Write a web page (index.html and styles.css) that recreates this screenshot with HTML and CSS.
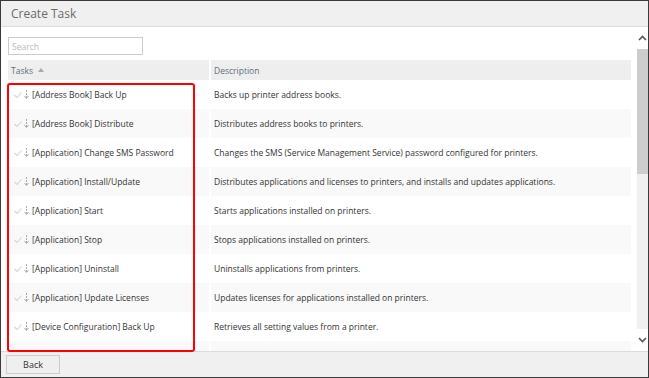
FILE: index.html
```html
<!DOCTYPE html>
<html lang="en">
<head>
    <meta charset="UTF-8">
    <title>Create Task</title>
    <link rel="stylesheet" href="styles.css">
</head>
<body>

<div class="dialog">
    <div class="titlebar">Create Task</div>

    <div class="main">
        <div class="content">
            <input class="search" type="text" placeholder="Search">

            <div class="grid">
                <div class="row head">
                    <div class="cell task">Tasks <span class="sort"></span></div>
                    <div class="cell desc">Description</div>
                </div>
                <div id="rows"></div>
            </div>
        </div>

        <div class="scrollbar">
            <div class="arrow">
                <svg width="9" height="6" viewBox="0 0 9 6"><polyline points="1,5 4.5,1.5 8,5" fill="none" stroke="#555" stroke-width="1.6"/></svg>
            </div>
            <div class="track"><div class="thumb"></div></div>
            <div class="arrow">
                <svg width="9" height="6" viewBox="0 0 9 6"><polyline points="1,1 4.5,4.5 8,1" fill="none" stroke="#555" stroke-width="1.6"/></svg>
            </div>
        </div>
    </div>

    <div class="footer">
        <button class="button">Back</button>
    </div>

    <div class="highlight"></div>
</div>

<script>
    const tasks = [
        ['[Address Book] Back Up', 'Backs up printer address books.'],
        ['[Address Book] Distribute', 'Distributes address books to printers.'],
        ['[Application] Change SMS Password', 'Changes the SMS (Service Management Service) password configured for printers.'],
        ['[Application] Install/Update', 'Distributes applications and licenses to printers, and installs and updates applications.'],
        ['[Application] Start', 'Starts applications installed on printers.'],
        ['[Application] Stop', 'Stops applications installed on printers.'],
        ['[Application] Uninstall', 'Uninstalls applications from printers.'],
        ['[Application] Update Licenses', 'Updates licenses for applications installed on printers.'],
        ['[Device Configuration] Back Up', 'Retrieves all setting values from a printer.'],
        ['[Device Configuration] Distribute', 'Distributes setting values to printers and changes printer settings.']
    ];

    const icons = `
        <svg class="check" width="8" height="6" viewBox="0 0 8 6"><polyline points="0.5,3 3,5.5 7.5,0.5" fill="none" stroke="#d4d4d4" stroke-width="1.1"/></svg>
        <svg class="move" width="5" height="9" viewBox="0 0 5 9"><line x1="2.5" y1="0" x2="2.5" y2="8" stroke="#aaa" stroke-width="1" stroke-dasharray="2 1"/><polyline points="0.5,6 2.5,8.5 4.5,6" fill="none" stroke="#aaa" stroke-width="1"/></svg>`;

    const rows = document.getElementById('rows');
    tasks.forEach(([name, desc]) => {
        rows.innerHTML += `
            <div class="row">
                <div class="cell task">${icons}<span>${name}</span></div>
                <div class="cell desc">${desc}</div>
            </div>`;
    });
</script>

</body>
</html>
```

FILE: styles.css
```css
* { box-sizing: border-box; }
body { margin: 0; font-family: "Open Sans", "Noto Sans", sans-serif; font-size: 8.5px; color: #333; }

.dialog { position: relative; width: 649px; height: 378px; border: 1px solid #3a3a3a; display: flex; flex-direction: column; background: #fff; overflow: hidden; }

.titlebar { height: 26px; flex: none; background: #f0f0f0; border-bottom: 1px solid #dcdcdc; padding-left: 10px; line-height: 25px; font-size: 12px; color: #6a6a6a; }

.main { flex: 1; display: flex; min-height: 0; }
.content { flex: 1; padding: 10px 6px 0 7px; overflow: hidden; }

.search { display: block; width: 135px; height: 18px; border: 1px solid #ccc; padding: 0 3px; font-family: inherit; font-size: 8.5px; color: #333; outline: none; }
.search::placeholder { color: #bbb; }

.grid { margin-top: 5px; }
.row { display: flex; height: 29px; align-items: center; background: #fff; }
#rows .row:nth-child(even) { background: #f9f9f9; }
.row.head { height: 20px; background: #eee; }
.cell { height: 100%; display: flex; align-items: center; white-space: nowrap; }
.cell.task { width: 201px; padding-left: 6px; }
.cell.desc { flex: 1; padding-left: 3px; border-left: 2px solid #fff; }
.head .cell { color: #5d6f80; }
.head .cell.task { padding-left: 3px; }

.sort { display: inline-block; margin-left: 5px; border-left: 3px solid transparent; border-right: 3px solid transparent; border-bottom: 4px solid #aaa; }

.check { margin-right: 2px; }
.move { margin-right: 3px; }

.scrollbar { width: 11px; flex: none; display: flex; flex-direction: column; background: #f0f0f0; }
.arrow { height: 22px; display: flex; align-items: center; justify-content: center; background: #fff; }
.track { flex: 1; }
.thumb { height: 125px; background: #cdcdcd; }

.footer { height: 26px; flex: none; background: #f0f0f0; border-top: 1px solid #dcdcdc; padding: 3px 5px; }
.button { width: 54px; height: 19px; border: 1px solid #ccc; background: #efefef; font-family: inherit; font-size: 9px; color: #333; padding: 0; }

.highlight { position: absolute; left: 6px; top: 82px; width: 188px; height: 269px; border: 2px solid #f00; border-radius: 3px; }
```
